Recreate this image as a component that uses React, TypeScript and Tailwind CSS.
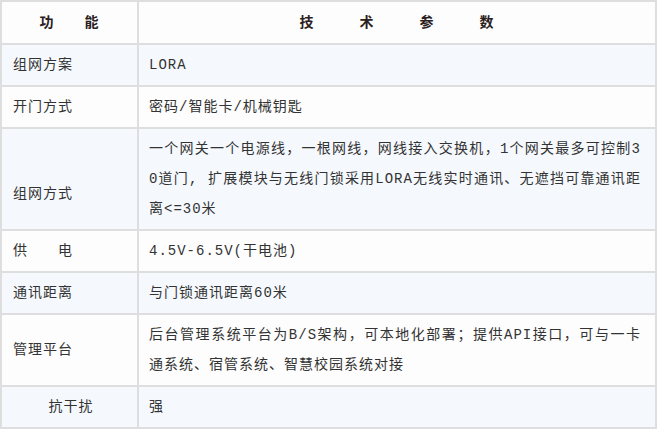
const FONT =
  "font-['Liberation_Mono','Noto_Sans_CJK_SC',monospace] text-[14px] tracking-[1px] leading-[30px] text-[#333]";

type Row = {
  name: string;
  center?: boolean;
  lead?: boolean;
  lines: string[];
};

const rows: Row[] = [
  { name: '组网方案', lines: ['LORA'] },
  { name: '开门方式', lines: ['密码/智能卡/机械钥匙'] },
  {
    name: '组网方式',
    lead: true,
    lines: [
      '一个网关一个电源线，一根网线，网线接入交换机，1个网关最多可控制3',
      '0道门, 扩展模块与无线门锁采用LORA无线实时通讯、无遮挡可靠通讯距',
      '离<=30米',
    ],
  },
  { name: '供\u3000\u3000电', lines: ['4.5V-6.5V(干电池)'] },
  { name: '通讯距离', lines: ['与门锁通讯距离60米'] },
  {
    name: '管理平台',
    lines: [
      '后台管理系统平台为B/S架构，可本地化部署；提供API接口，可与一卡',
      '通系统、宿管系统、智慧校园系统对接',
    ],
  },
  { name: '抗干扰', center: true, lines: ['强'] },
];

export default function App() {
  return (
    <div className="w-[658px] h-[430px] bg-white">
      <div className={`grid grid-cols-[135px_516px] gap-[2px] p-[2px] bg-[#dedede] w-fit ${FONT}`}>
        <div className="h-[41px] flex items-center justify-center bg-[#fdfdfd] font-bold text-[#2a2020]">
          功{'\u3000\u3000'}能
        </div>
        <div className="h-[41px] flex items-center justify-center bg-[#fdfdfd] font-bold text-[#2a2020]">
          技{'\u3000\u3000\u3000'}术{'\u3000\u3000\u3000'}参{'\u3000\u3000\u3000'}数
        </div>

        {rows.map((row, i) => {
          const bg = i % 2 === 0 ? 'bg-[#f5f9fe]' : 'bg-[#fdfdfd]';
          return (
            <div key={i} className="contents">
              <div
                className={`${bg} py-[5px] pl-[11px] pr-[8px] flex flex-col justify-center ${
                  row.center ? 'items-center pl-0 pr-0' : ''
                }`}
              >
                {row.lead && <div className="h-[30px]" />}
                <div className="whitespace-pre">{row.name}</div>
              </div>
              <div className={`${bg} py-[5px] pl-[10px] pr-[14px]`}>
                {row.lines.map((line, j) => (
                  <div
                    key={j}
                    className={`whitespace-nowrap ${
                      j < row.lines.length - 1 ? 'text-justify [text-align-last:justify]' : ''
                    }`}
                  >
                    {line}
                  </div>
                ))}
              </div>
            </div>
          );
        })}
      </div>
    </div>
  );
}
